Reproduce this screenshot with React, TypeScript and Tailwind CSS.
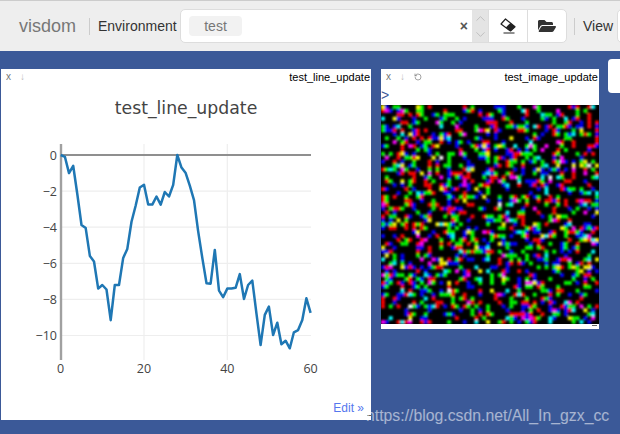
import { FaFolderOpen } from "react-icons/fa"
import { ChevronUp, ChevronDown, RotateCcw } from "lucide-react"

const values = [
  0, -0.1, -1.0, -0.6, -2.2, -3.88, -4.05, -5.6, -5.9, -7.4, -7.2, -7.45, -9.15, -7.2, -7.2, -5.7, -5.2, -3.7, -2.8, -1.8,
  -1.65, -2.75, -2.75, -2.3, -2.75, -2.05, -2.3, -1.65, 0, -0.7, -1.0, -1.7, -2.5, -4.2, -5.7, -7.1, -7.13, -5.26, -7.52,
  -7.88, -7.4, -7.4, -7.36, -6.6, -7.98, -7.2, -6.96, -8.8, -10.53, -8.86, -8.4, -9.97, -9.29, -10.49, -10.29, -10.71,
  -9.82, -9.7, -9.14, -7.94, -8.74,
]

const px = (i: number) => 60.7 + i * 4.165
const py = (v: number) => 155 + -v * 18.05

function LineChart() {
  const points = values.map((v, i) => `${px(i).toFixed(1)},${py(v).toFixed(1)}`).join(" ")
  return (
    <svg width="370" height="351" viewBox="1 69 370 351" className="absolute left-0 top-0" fontFamily="'Open Sans', sans-serif">
      <text x="186" y="114" textAnchor="middle" fontSize="17.3" fill="#444" fontFamily="'DejaVu Sans', sans-serif">test_line_update</text>
      {[-2, -4, -6, -8, -10].map((v) => (
        <line key={v} x1="61" x2="311" y1={py(v)} y2={py(v)} stroke="#eee" strokeWidth="1.2" />
      ))}
      {[20, 40].map((t) => (
        <line key={t} x1={px(t)} x2={px(t)} y1="144" y2="360" stroke="#eee" strokeWidth="1.2" />
      ))}
      <line x1="61" x2="311" y1="155" y2="155" stroke="#8f8f8f" strokeWidth="2" />
      <line x1="61" x2="61" y1="144" y2="360" stroke="#a0a0a0" strokeWidth="2.4" />
      <polyline points={points} fill="none" stroke="#1f77b4" strokeWidth="2.5" strokeLinejoin="round" />
      {[0, -2, -4, -6, -8, -10].map((v) => (
        <text key={v} x="57" y={py(v) + 4.5} textAnchor="end" fontSize="12.5" fill="#444">
          {v === 0 ? "0" : `\u2212${-v}`}
        </text>
      ))}
      {[0, 20, 40, 60].map((t) => (
        <text key={t} x={px(t)} y="373" textAnchor="middle" fontSize="12.5" fill="#444">{t}</text>
      ))}
    </svg>
  )
}

// seeded so the noise comes out the same on every run
function noiseCells() {
  let seed = 12345
  const rand = () => {
    seed = (seed * 1664525 + 1013904223) % 4294967296
    return seed / 4294967296
  }
  const cells: { x: number; y: number; color: string }[] = []
  for (let y = 0; y < 56; y++) {
    for (let x = 0; x < 56; x++) {
      const r = rand() < 0.16 ? 255 : 0
      const g = rand() < 0.16 ? 255 : 0
      const b = rand() < 0.16 ? 255 : 0
      if (r || g || b) cells.push({ x, y, color: `rgb(${r},${g},${b})` })
    }
  }
  return cells
}

function NoiseImage() {
  return (
    <svg width="218" height="219" viewBox="0 0 56 56" preserveAspectRatio="none" className="block bg-black">
      <defs>
        <filter id="soft" x="0" y="0" width="100%" height="100%">
          <feGaussianBlur stdDeviation="0.33" />
        </filter>
      </defs>
      <g filter="url(#soft)">
        {noiseCells().map((c) => (
          <rect key={`${c.x}-${c.y}`} x={c.x} y={c.y} width="1" height="1" fill={c.color} />
        ))}
      </g>
    </svg>
  )
}

function EraserIcon() {
  return (
    <svg width="16" height="16" viewBox="0 0 16 16" fill="#222">
      <path d="M5.5 1 15 8.8 10.5 13 1 6Z" fill="none" stroke="#222" strokeWidth="1.2" strokeLinejoin="round" />
      <path d="M10.4 4.9 15 8.8 10.5 13 5.8 9.5Z" />
      <path d="M3.5 14.4H14.5V15.6H3.5Z" />
    </svg>
  )
}

function PaneBar({ title, reload }: { title: string; reload?: boolean }) {
  return (
    <div className="flex items-center h-[16px] pl-[5px] pr-px">
      <span className="text-[10px] leading-none text-[#777] w-[14px]">x</span>
      <span className="text-[10px] leading-none text-[#bbb] w-[14px]">↓</span>
      {reload && <RotateCcw className="w-[8px] h-[8px] text-[#777]" strokeWidth={2} />}
      <span className="ml-auto text-[11px] leading-none text-black">{title}</span>
    </div>
  )
}

export default function App() {
  return (
    <div className="w-[620px] h-[434px] overflow-hidden relative flex flex-col bg-[#3b5998] font-['Liberation_Sans',Arial,sans-serif]">
      {/* Top bar */}
      <div className="h-[51px] shrink-0 flex items-center bg-[#eeeeee] border-t border-[#cccccc] whitespace-nowrap">
        <span className="shrink-0 ml-[19px] text-[18px] text-[#777777] w-[57px]">visdom</span>
        <div className="shrink-0 ml-[13px] w-px h-[17px] bg-[#cccccc]" />
        <span className="shrink-0 ml-[8px] text-[14px] text-[#333333] w-[82px]">Environment</span>
        <div className="flex shrink-0 h-[34px] w-[387px] rounded-[5px] border border-[#dddddd] bg-white overflow-hidden">
          <div className="flex-1 flex items-center pl-[8px] pr-[4px]">
            <span className="w-[53px] h-[20px] rounded-[4px] bg-[#f2f2f2] text-[14px] leading-[20px] text-[#777777] text-center">test</span>
            <span className="ml-auto text-[14px] font-bold leading-none text-[#555]">×</span>
          </div>
          <div className="w-[16px] flex flex-col items-center justify-center gap-[1px] bg-[#e4e4e4] text-[#aaa]">
            <ChevronUp className="w-[15px] h-[15px]" strokeWidth={1} />
            <ChevronDown className="w-[15px] h-[15px]" strokeWidth={1} />
          </div>
          <div className="w-[39px] flex items-center justify-center border-l border-[#dddddd]">
            <EraserIcon />
          </div>
          <div className="w-[39px] flex items-center justify-center border-l border-[#dddddd]">
            <FaFolderOpen className="w-[18px] h-[16px] text-[#333]" />
          </div>
        </div>
        <div className="shrink-0 ml-[7px] w-px h-[17px] bg-[#cccccc]" />
        <span className="shrink-0 ml-[8px] text-[14px] text-[#333333] w-[34px]">View</span>
        <div className="shrink-0 w-[20px] h-[34px] rounded-l-[5px] border border-[#dddddd] bg-white" />
      </div>

      {/* Panes */}
      <div className="flex-1 flex items-start pt-[18px] pl-px">
        <div className="relative shrink-0 w-[370px] h-[351px] bg-white">
          <PaneBar title="test_line_update" />
          <LineChart />
          <span className="absolute right-[7px] bottom-[6px] text-[12px] leading-none text-[#5577ee]">Edit »</span>
          <span className="absolute -right-px bottom-[4px] w-[5px] h-px bg-[#666]" />
        </div>
        <div className="relative shrink-0 ml-[10px] w-[218px] h-[260px] bg-white">
          <PaneBar title="test_image_update" reload />
          <div className="h-[20px] text-[14px] leading-[20px] text-[#3b5998]">&gt;</div>
          <NoiseImage />
          <span className="absolute right-[2px] bottom-[3px] w-[5px] h-px bg-[#666]" />
        </div>
        <div className="shrink-0 ml-[9px] -mt-[10px] w-[20px] h-[34px] rounded-l-[4px] bg-white" />
      </div>

      {/* Watermark */}
      <span className="absolute left-[366px] top-[406px] text-[15.8px] leading-[20px] text-white/55">https://blog.csdn.net/All_In_gzx_cc</span>
    </div>
  )
}
